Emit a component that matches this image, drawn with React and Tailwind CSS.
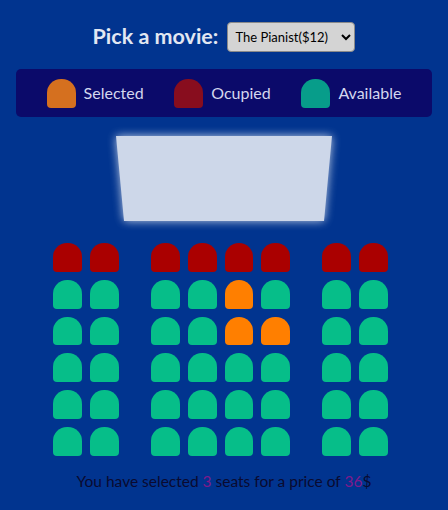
import React from "react";

const RED = "bg-[#aa0000]";
const TEAL = "bg-[#06be89]";
const ORANGE = "bg-[#ff7f00]";

function Seat({ color }) {
  return <div className={`w-[28.8px] h-[28.8px] rounded-t-[14px] rounded-b-[4px] ${color}`} />;
}

const rows = [
  ["r", "r", "r", "r", "r", "r", "r", "r"],
  ["t", "t", "t", "t", "o", "t", "t", "t"],
  ["t", "t", "t", "t", "o", "o", "t", "t"],
  ["t", "t", "t", "t", "t", "t", "t", "t"],
  ["t", "t", "t", "t", "t", "t", "t", "t"],
  ["t", "t", "t", "t", "t", "t", "t", "t"],
];

const colorOf = (c) => (c === "r" ? RED : c === "o" ? ORANGE : TEAL);

function Row({ seats }) {
  return (
    <div className="flex gap-[32px]">
      <div className="flex gap-[8px]">
        {seats.slice(0, 2).map((c, i) => (
          <Seat key={i} color={colorOf(c)} />
        ))}
      </div>
      <div className="flex gap-[8px]">
        {seats.slice(2, 6).map((c, i) => (
          <Seat key={i} color={colorOf(c)} />
        ))}
      </div>
      <div className="flex gap-[8px]">
        {seats.slice(6, 8).map((c, i) => (
          <Seat key={i} color={colorOf(c)} />
        ))}
      </div>
    </div>
  );
}

function LegendItem({ color, label }) {
  return (
    <div className="flex items-center gap-[8px]">
      <div className={`w-[29px] h-[29px] rounded-t-[14px] rounded-b-[4px] ${color}`} />
      <span className="text-[16px] text-[#d4d7ee]">{label}</span>
    </div>
  );
}

export default function App() {
  return (
    <div
      className="w-[448px] h-[510px] bg-[#01348f] flex flex-col items-center overflow-hidden"
      style={{ fontFamily: "Lato, 'Open Sans', sans-serif" }}
    >
      <div className="flex items-center gap-[9px] mt-[22px] h-[30px]">
        <span className="text-[21.5px] font-bold text-[#e2e7f2] leading-none">Pick a movie:</span>
        <select
          className="w-[128px] h-[30px] bg-[#d4d4d4] text-black border border-[#8a8a8a] rounded-[4px] text-[13px] pl-[3px]"
          defaultValue="pianist"
        >
          <option value="pianist">The Pianist($12)</option>
        </select>
      </div>

      <div className="mt-[17px] w-[416px] h-[48px] rounded-[5px] bg-[#0b0a6a] flex items-center justify-evenly">
        <LegendItem color="bg-[#d5701f]" label="Selected" />
        <LegendItem color="bg-[#880d1e]" label="Ocupied" />
        <LegendItem color="bg-[#079d8a]" label="Available" />
      </div>

      <div className="mt-[19px] [filter:drop-shadow(0_0_5px_rgba(255,255,255,0.75))]">
        <div className="w-[216px] h-[85px] bg-[#cdd7e9] [clip-path:polygon(0_0,100%_0,96.3%_100%,3.7%_100%)]" />
      </div>

      <div className="mt-[22px] flex flex-col gap-[8px] mr-[7px]">
        {rows.map((r, i) => (
          <Row key={i} seats={r} />
        ))}
      </div>

      <p className="mt-[14px] text-[15.5px] text-[#0a0a30]">
        You have selected <span className="text-[#7f1a8c]">3</span> seats for a price of{" "}
        <span className="text-[#7f1a8c]">36</span>$
      </p>
    </div>
  );
}
